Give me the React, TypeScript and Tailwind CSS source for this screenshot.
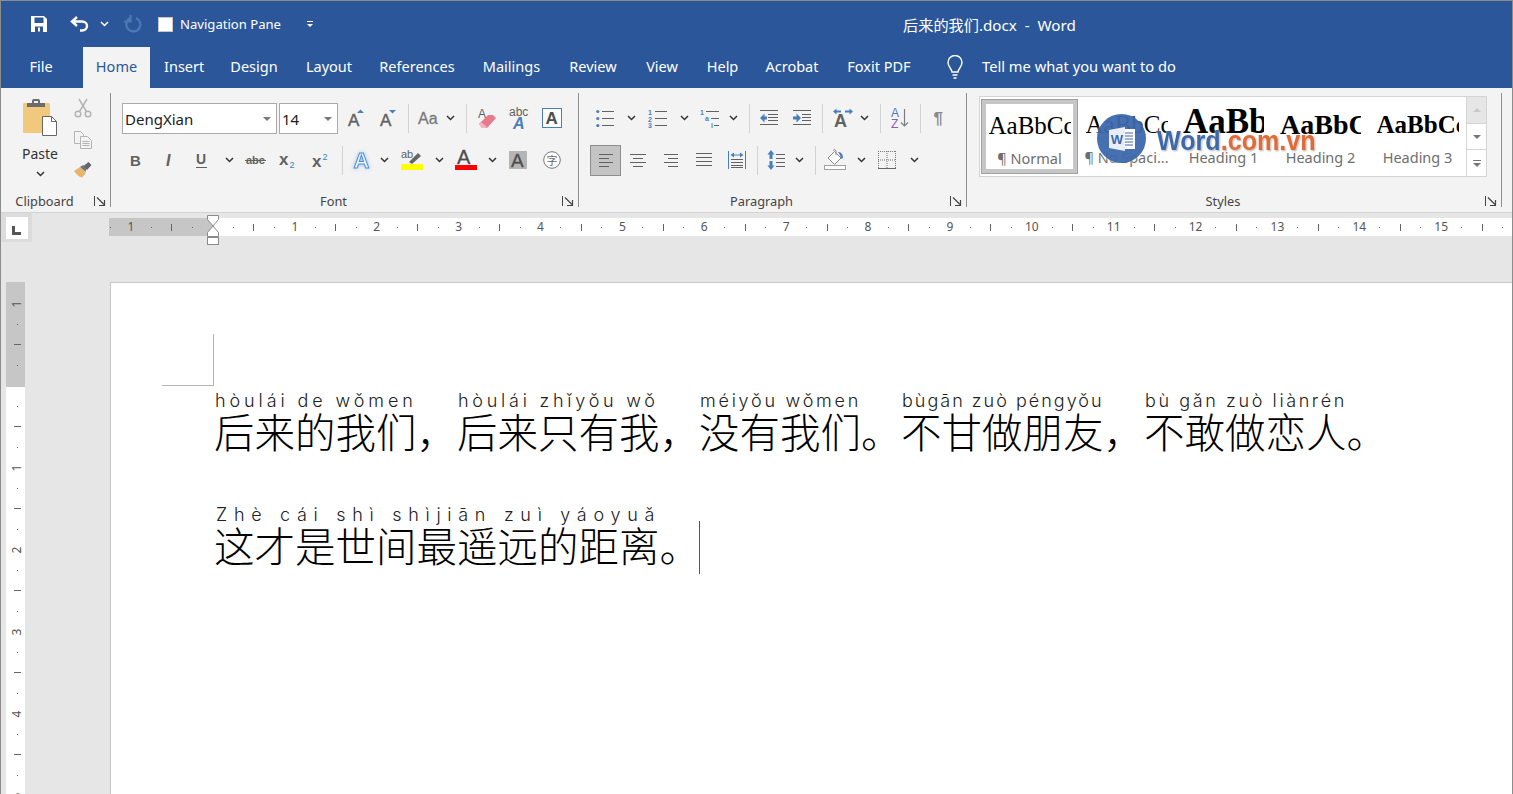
import type { ReactNode } from "react";

const ui = "font-['Noto_Sans','Open_Sans',sans-serif]";
const G = "#616161";
const B = "#4a7ebb";
const SVGFONT = "'Liberation Sans', sans-serif";

function Slot({ w, children }: { w: string; children?: ReactNode }) {
  return <span className={`flex h-full shrink-0 items-center justify-center ${w}`}>{children}</span>;
}

function Sep({ w }: { w: string }) {
  return (
    <span className={`flex h-full shrink-0 items-center justify-center ${w}`}>
      <span className="h-[29px] w-px bg-[#d2d2d2]" />
    </span>
  );
}

function Chev({ color = "#333" }: { color?: string }) {
  return (
    <svg width="9" height="6" viewBox="0 0 9 6" className="shrink-0">
      <path d="M1 1l3.500 3.500L8 1" fill="none" stroke={color} strokeWidth="1.500" />
    </svg>
  );
}

function Launcher() {
  return (
    <svg width="12" height="11" viewBox="0 0 12 11" className="absolute bottom-[5px] right-[4px]">
      <path d="M.5 0v10" stroke="#444" strokeWidth="1" />
      <path d="M3 1.500l7 7M5 9.500h5.500V4" fill="none" stroke="#444" strokeWidth="1.200" />
    </svg>
  );
}

function Glyph({ size = 20, children }: { size?: number; children: ReactNode }) {
  return (
    <svg width={size} height={size} viewBox={`0 0 ${size} ${size}`} className="shrink-0" fontFamily={SVGFONT}>
      {children}
    </svg>
  );
}

function Lines({ rows }: { rows: [number, number, number][] }) {
  return (
    <>
      {rows.map(([x1, x2, y], i) => (
        <path key={i} d={`M${x1} ${y + 0.5}H${x2}`} stroke={G} strokeWidth="1" />
      ))}
    </>
  );
}

function PasteIcon() {
  return (
    <svg width="35" height="38" viewBox="0 0 35 38" className="shrink-0">
      <rect x="0" y="5" width="27" height="30" rx="1.500" fill="#f0c97c" />
      <path d="M4 5h5V3a2 2 0 012-2h4a2 2 0 012 2v2h5v4H4z" fill="#6b6b6b" />
      <rect x="11" y="3" width="4" height="2" fill="#f0f0f0" />
      <path d="M19.500 18.500h9l5 5v14h-14z" fill="#fff" stroke="#666" />
      <path d="M28.500 18.500v5h5" fill="none" stroke="#666" />
    </svg>
  );
}

function CutIcon() {
  return (
    <svg width="18" height="20" viewBox="0 0 18 20" className="shrink-0">
      <g fill="none" stroke="#b4b4b4" strokeWidth="1.500">
        <circle cx="4" cy="16" r="2.800" />
        <circle cx="14" cy="16" r="2.800" />
        <path d="M5.500 13.500L13 1M12.500 13.500L5 1" />
      </g>
    </svg>
  );
}

function CopyIcon() {
  return (
    <svg width="18" height="18" viewBox="0 0 18 18" className="shrink-0">
      <g fill="#f3f3f3" stroke="#b4b4b4">
        <path d="M.5.5h6l3 3v9h-9z" />
        <path d="M6.500 5.500h7l4 4v8h-11z" />
        <path d="M8.500 10.500h7M8.500 12.500h7M8.500 14.500h7" fill="none" />
      </g>
    </svg>
  );
}

function PainterIcon() {
  return (
    <svg width="18" height="16" viewBox="0 0 18 16" className="shrink-0">
      <path d="M0 9l6-4 6 6-4 4.500C5 15 2 12 0 9z" fill="#e6b56c" />
      <path d="M6 5l3-2 3.500 3.500-1 3.500z" fill="#777" />
      <path d="M9.500 4l5-4 3 3-4.500 5z" fill="#666" />
    </svg>
  );
}

function Combo({ w, label, className }: { w: string; label: string; className?: string }) {
  return (
    <span className={`flex h-full shrink-0 items-center justify-between border border-[#ababab] bg-white pl-[2px] pr-[5px] pt-px text-[15px] text-[#222] ${w} ${className ?? ""}`}>
      {label}
      <span className="h-0 w-0 border-x-[4px] border-t-[4px] border-x-transparent border-t-[#777]" />
    </span>
  );
}

function FontRow1() {
  return (
    <div className="flex h-[31px] [&_svg]:-translate-y-px">
      <Combo w="w-[155px]" label="DengXian" className="mr-[2px]" />
      <Combo w="w-[59px]" label="14" />
      <Slot w="w-[36px]">
        <Glyph>
          <text x="2" y="18" fontSize="17" fill={G} stroke={G} strokeWidth=".4">A</text>
          <path d="M11 5l3.500-3.500L18 5z" fill={B} />
        </Glyph>
      </Slot>
      <Slot w="w-[28px]">
        <Glyph>
          <text x="2" y="18" fontSize="17" fill={G} stroke={G} strokeWidth=".4">A</text>
          <path d="M11 2h7l-3.500 3.500z" fill={B} />
        </Glyph>
      </Slot>
      <Sep w="w-[12px]" />
      <Slot w="w-[28px]">
        <Glyph size={24}>
          <text x="2" y="18" fontSize="16" fill="#7a7a7a" stroke="#7a7a7a" strokeWidth=".3">Aa</text>
        </Glyph>
      </Slot>
      <Slot w="w-[16px]"><Chev /></Slot>
      <Sep w="w-[16px]" />
      <Slot w="w-[26px]">
        <Glyph size={22}>
          <text x="2" y="11" fontSize="12" fill={G}>A</text>
          <path d="M3 17l9-9 5 0 3 3-9 10-5 0z" fill="#e8798c" />
          <path d="M3 17l2-2 6 5-1 1h-4z" fill="#f3b5bf" />
        </Glyph>
      </Slot>
      <Slot w="w-[38px]">
        <Glyph size={22}>
          <text x="1" y="9" fontSize="12" fill={G}>abc</text>
          <text x="5" y="22" fontSize="16" fontWeight="bold" fontStyle="italic" fill={B}>A</text>
        </Glyph>
      </Slot>
      <Slot w="w-[28px]">
        <Glyph>
          <rect x=".5" y=".5" width="19" height="19" fill="#fff" stroke={B} />
          <text x="3.500" y="16" fontSize="17" fill="#4d4d4d" fontWeight="bold">A</text>
        </Glyph>
      </Slot>
    </div>
  );
}

function FontRow2() {
  return (
    <div className="mt-[11px] flex h-[31px] [&_svg]:-translate-y-px">
      <Slot w="w-[28px]">
        <Glyph size={16}><text x="2" y="14" fontSize="15" fontWeight="bold" fill={G}>B</text></Glyph>
      </Slot>
      <Slot w="w-[40px]">
        <Glyph size={16}><text x="4" y="14" fontSize="16" fontWeight="bold" fontStyle="italic" fill={G}>I</text></Glyph>
      </Slot>
      <Slot w="w-[24px]">
        <Glyph size={16}>
          <text x="2" y="12" fontSize="14" fontWeight="bold" fill={G}>U</text>
          <path d="M2 15.500h11" stroke={G} />
        </Glyph>
      </Slot>
      <Slot w="w-[30px]"><Chev /></Slot>
      <Slot w="w-[24px]">
        <Glyph size={22}>
          <text x="1" y="15" fontSize="11" fontWeight="bold" fill={G}>abc</text>
          <path d="M0 11.500h21" stroke={G} />
        </Glyph>
      </Slot>
      <Slot w="w-[40px]">
        <Glyph size={18}>
          <text x="0" y="14" fontSize="17" fontWeight="bold" fill={G}>x</text>
          <text x="10.500" y="17" fontSize="9" fill={B}>2</text>
        </Glyph>
      </Slot>
      <Slot w="w-[26px]">
        <Glyph size={18}>
          <text x="0" y="16" fontSize="17" fontWeight="bold" fill={G}>x</text>
          <text x="10.500" y="9" fontSize="9" fill={B}>2</text>
        </Glyph>
      </Slot>
      <Sep w="w-[16px]" />
      <Slot w="w-[24px]">
        <svg width="20" height="20" viewBox="0 0 20 20" className="shrink-0 overflow-visible drop-shadow-[0_0_2px_#9cc3ee]" fontFamily={SVGFONT}>
          <text x="1.500" y="18" fontSize="22" fontWeight="bold" fill="#f2f7fd" stroke="#4f8fd8" strokeWidth="1">A</text>
        </svg>
      </Slot>
      <Slot w="w-[20px]"><Chev /></Slot>
      <Slot w="w-[36px]">
        <Glyph size={24}>
          <text x="1" y="10" fontSize="11" fill={G}>ab</text>
          <path d="M9 14l9-9 3 3-9 8z" fill="#666" />
          <rect x="1" y="16" width="22" height="6" fill="#ffff00" />
        </Glyph>
      </Slot>
      <Slot w="w-[18px]"><Chev /></Slot>
      <Slot w="w-[36px]">
        <Glyph size={24}>
          <text x="3" y="16" fontSize="20" fill="#4d4d4d" stroke="#4d4d4d" strokeWidth=".3">A</text>
          <rect x="1" y="17" width="22" height="5" fill="#ff0000" />
        </Glyph>
      </Slot>
      <Slot w="w-[16px]"><Chev /></Slot>
      <Slot w="w-[36px]">
        <Glyph size={18}>
          <rect width="18" height="18" fill="#b5b5b5" />
          <text x="2" y="16" fontSize="19" fill="#4d4d4d" stroke="#4d4d4d" strokeWidth=".3">A</text>
        </Glyph>
      </Slot>
      <Slot w="w-[32px]">
        <svg width="18" height="18" viewBox="0 0 18 18" className="shrink-0">
          <circle cx="9" cy="9" r="8.300" fill="#fff" stroke="#777" />
          <text x="9" y="13.500" fontSize="11" fill="#666" textAnchor="middle" fontFamily="'Noto Sans CJK SC', sans-serif">字</text>
        </svg>
      </Slot>
    </div>
  );
}

function ParaRow1() {
  return (
    <div className="flex h-[31px] pl-[17px] [&_svg]:-translate-y-px">
      <Slot w="w-[18px]">
        <Glyph size={18}>
          <circle cx="1.800" cy="2.500" r="1.600" fill={B} />
          <circle cx="1.800" cy="9.500" r="1.600" fill={B} />
          <circle cx="1.800" cy="16.500" r="1.600" fill={B} />
          <Lines rows={[[6, 18, 2], [6, 18, 9], [6, 18, 16]]} />
        </Glyph>
      </Slot>
      <Slot w="w-[34px]"><Chev /></Slot>
      <Slot w="w-[20px]">
        <Glyph size={20}>
          <text x="0" y="7" fontSize="7" fill={B} fontWeight="bold">1</text>
          <text x="0" y="14" fontSize="7" fill={B} fontWeight="bold">2</text>
          <text x="0" y="20" fontSize="7" fill={B} fontWeight="bold">3</text>
          <Lines rows={[[7, 19, 3], [7, 19, 10], [7, 19, 17]]} />
        </Glyph>
      </Slot>
      <Slot w="w-[32px]"><Chev /></Slot>
      <Slot w="w-[20px]">
        <Glyph size={20}>
          <text x="0" y="7" fontSize="7" fill={B} fontWeight="bold">1</text>
          <text x="5" y="13" fontSize="7" fill={B} fontWeight="bold">a</text>
          <text x="11" y="19.500" fontSize="7" fill={B} fontWeight="bold">i</text>
          <Lines rows={[[6, 19, 3], [11, 19, 10], [14, 19, 17]]} />
        </Glyph>
      </Slot>
      <Slot w="w-[26px]"><Chev /></Slot>
      <Sep w="w-[6px]" />
      <Slot w="w-[34px]">
        <Glyph size={18}>
          <Lines rows={[[0, 18, 1], [8, 18, 5], [8, 18, 8], [8, 18, 11], [0, 18, 15]]} />
          <path d="M0 9l4.500-4.500V7.500H7v3H4.500v3z" fill={B} />
        </Glyph>
      </Slot>
      <Slot w="w-[32px]">
        <Glyph size={18}>
          <Lines rows={[[0, 18, 1], [9, 18, 5], [9, 18, 8], [9, 18, 11], [0, 18, 15]]} />
          <path d="M8 9L3.500 4.500V7.500H0v3h3.500v3z" fill={B} />
        </Glyph>
      </Slot>
      <Sep w="w-[8px]" />
      <Slot w="w-[34px]">
        <Glyph size={20}>
          <text x="1" y="19" fontSize="18" fontWeight="bold" fill={G}>A</text>
          <path d="M0 3.500l3.500-3v2H8v2H3.500v2zM20 3.500l-3.500-3v2H12v2h4.500v2z" fill={B} />
        </Glyph>
      </Slot>
      <Slot w="w-[8px]"><Chev /></Slot>
      <Sep w="w-[24px]" />
      <Slot w="w-[18px]">
        <Glyph size={20}>
          <text x="0" y="9" fontSize="12" fill={B}>A</text>
          <text x="0" y="19.500" fontSize="12" fill="#8a5bb5">Z</text>
          <path d="M13.500 1v17M10 14.500l3.500 3.500 3.500-3.500" fill="none" stroke="#7c7c7c" strokeWidth="1.200" />
        </Glyph>
      </Slot>
      <Sep w="w-[20px]" />
      <Slot w="w-[18px]">
        <Glyph size={18}>
          <text x="3.500" y="15" fontSize="17" fontWeight="bold" fill="#8a8a8a">¶</text>
        </Glyph>
      </Slot>
    </div>
  );
}

function AlignIcon({ rows }: { rows: [number, number, number][] }) {
  return (
    <svg width="16" height="16" viewBox="0 0 16 16" className="shrink-0">
      <Lines rows={rows} />
    </svg>
  );
}

function ParaRow2() {
  return (
    <div className="mt-[11px] flex h-[31px] pl-[11px] [&_svg]:-translate-y-px">
      <Slot w="w-[31px] border border-[#8e8e8e] bg-[#c4c4c4]">
        <AlignIcon rows={[[1, 15, 2], [1, 11, 6], [1, 15, 10], [1, 11, 14]]} />
      </Slot>
      <Slot w="w-[34px]">
        <AlignIcon rows={[[0, 16, 2], [3, 13, 6], [0, 16, 10], [3, 13, 14]]} />
      </Slot>
      <Slot w="w-[32px]">
        <AlignIcon rows={[[1, 15, 2], [5, 15, 6], [1, 15, 10], [5, 15, 14]]} />
      </Slot>
      <Slot w="w-[34px]">
        <AlignIcon rows={[[0, 16, 1], [0, 16, 5], [0, 16, 9], [0, 16, 13]]} />
      </Slot>
      <Slot w="w-[32px]">
        <Glyph size={18}>
          <path d="M.5 0v18M17.500 0v18" stroke={B} />
          <path d="M2.500 4L6 1.500v2h6v-2L15.500 4 12 6.500v-2H6v2z" fill={B} />
          <Lines rows={[[3, 15, 8], [3, 15, 11], [3, 15, 14], [3, 15, 16]]} />
        </Glyph>
      </Slot>
      <Sep w="w-[8px]" />
      <Slot w="w-[32px]">
        <Glyph size={20}>
          <path d="M3 0L6.500 4.500H4.500V9h-3V4.500h-2z" transform="translate(1 0)" fill={B} />
          <path d="M3 20L6.500 15.500H4.500V11h-3v4.500h-2z" transform="translate(1 0)" fill={B} />
          <Lines rows={[[9, 18, 4], [9, 18, 8], [9, 18, 12], [9, 18, 16]]} />
        </Glyph>
      </Slot>
      <Slot w="w-[12px]"><Chev /></Slot>
      <Sep w="w-[20px]" />
      <Slot w="w-[20px]">
        <svg width="22" height="22" viewBox="0 0 22 22" className="shrink-0">
          <path d="M4 9l6.500-6.500L17 9l-6.500 6.500z" fill="#fff" stroke="#8a8a8a" />
          <path d="M9 1.500c1-1.500 3-1 3 1V6" fill="none" stroke="#8a8a8a" />
          <path d="M14 3c3 0 5 2 5 6l-2 1-1-4z" fill={B} />
          <rect x=".5" y="16.500" width="21" height="4" fill="#fff" stroke="#a0a0a0" />
        </svg>
      </Slot>
      <Slot w="w-[32px]"><Chev /></Slot>
      <Slot w="w-[20px]">
        <svg width="18" height="18" viewBox="0 0 18 18" className="shrink-0">
          <path d="M.5 0v18M9 0v18M17.500 0v18M0 .5h18M0 9h18" fill="none" stroke="#777" strokeDasharray="1 1" />
          <path d="M0 17.500h18" stroke="#666" />
        </svg>
      </Slot>
      <Slot w="w-[34px]"><Chev /></Slot>
    </div>
  );
}

function Group({ w, label, children, top = "pt-[15px]" }: { w: string; label: string; children: ReactNode; top?: string }) {
  return (
    <div className={`relative flex h-full shrink-0 flex-col ${top} ${w}`}>
      {children}
      <div className="mb-[3px] mt-auto h-[16px] pr-[22px] text-center text-[12.800px] leading-[16px] text-[#444]">{label}</div>
      <Launcher />
    </div>
  );
}

function GroupSep() {
  return <div className="mt-[5px] h-[114px] w-px shrink-0 bg-[#8f8f8f]" />;
}

const styleCells = [
  { name: "¶ Normal", sample: "text-[25px] font-normal", clip: "w-[82px]", selected: true },
  { name: "¶ No Spaci...", sample: "text-[25px] font-normal", clip: "w-[82px]", selected: false },
  { name: "Heading 1", sample: "text-[35px] font-bold -mt-[6px]", clip: "w-[81px]", selected: false },
  { name: "Heading 2", sample: "text-[28px] font-bold", clip: "w-[81px]", selected: false },
  { name: "Heading 3", sample: "text-[25px] font-bold", clip: "w-[82px]", selected: false },
];

function StyleGallery() {
  return (
    <div className="ml-[12px] flex h-[81px] w-[508px] border border-[#d4d4d4] bg-white">
      <div className="flex w-[487px] items-center pl-px">
        {styleCells.map((c) => (
          <div key={c.name} className={`flex h-[75px] w-[97px] shrink-0 flex-col items-center ${c.selected ? "border border-[#a0a0a0]" : ""}`}>
            <div className={`flex h-full w-full flex-col items-center ${c.selected ? "border-[4px] border-[#c6c6c6]" : "border-[4px] border-transparent"}`}>
              <div className={`flex h-[44px] items-center overflow-hidden whitespace-nowrap ${c.clip}`}>
                <span className={`font-['Liberation_Serif',serif] text-black ${c.sample}`}>AaBbCcDd</span>
              </div>
              <div className="whitespace-nowrap text-[14.500px] leading-[20px] text-[#6e6e6e]">{c.name}</div>
            </div>
          </div>
        ))}
      </div>
      <div className="flex w-[20px] flex-col border-l border-[#d4d4d4]">
        <span className="flex h-[27px] items-center justify-center border-b border-[#d4d4d4] bg-[#e6e6e6]">
          <span className="h-0 w-0 border-x-[4px] border-b-[4px] border-x-transparent border-b-[#c8c8c8]" />
        </span>
        <span className="flex h-[26px] items-center justify-center border-b border-[#d4d4d4]">
          <span className="h-0 w-0 border-x-[4px] border-t-[4px] border-x-transparent border-t-[#777]" />
        </span>
        <span className="flex flex-1 flex-col items-center justify-center gap-[2px]">
          <span className="h-px w-[8px] bg-[#777]" />
          <span className="h-0 w-0 border-x-[4px] border-t-[4px] border-x-transparent border-t-[#777]" />
        </span>
      </div>
    </div>
  );
}

function Ribbon() {
  return (
    <div className={`flex h-[125px] shrink-0 border-b border-[#d4d4d4] bg-[#f3f3f3] ${ui}`}>
      <Group w="w-[109px]" label="Clipboard" top="pt-[10px]">
        <div className="flex">
          <div className="ml-[7px] flex w-[64px] flex-col items-center">
            <PasteIcon />
            <div className="mt-[8px] text-[14px] leading-[20px] text-[#333]">Paste</div>
            <div className="mt-[7px] leading-none"><Chev /></div>
          </div>
          <div className="-ml-px flex w-[24px] flex-col items-center">
            <span className="flex h-[19px] items-center"><CutIcon /></span>
            <span className="mt-[13px] flex h-[19px] items-center"><CopyIcon /></span>
            <span className="mt-[11px] flex h-[19px] items-center"><PainterIcon /></span>
          </div>
        </div>
      </Group>
      <GroupSep />
      <Group w="w-[467px]" label="Font">
        <div className="pl-[11px]">
          <FontRow1 />
          <FontRow2 />
        </div>
      </Group>
      <GroupSep />
      <Group w="w-[387px]" label="Paragraph">
        <ParaRow1 />
        <ParaRow2 />
      </Group>
      <GroupSep />
      <Group w="w-[534px]" label="Styles" top="pt-[8px]">
        <StyleGallery />
      </Group>
      <GroupSep />
    </div>
  );
}

const tabs = [
  { label: "Insert", w: "w-[40px]", ml: "ml-[14px]" },
  { label: "Design", w: "w-[48px]", ml: "ml-[26px]" },
  { label: "Layout", w: "w-[48px]", ml: "ml-[27px]" },
  { label: "References", w: "w-[76px]", ml: "ml-[26px]" },
  { label: "Mailings", w: "w-[59px]", ml: "ml-[27px]" },
  { label: "Review", w: "w-[50px]", ml: "ml-[27px]" },
  { label: "View", w: "w-[34px]", ml: "ml-[27px]" },
  { label: "Help", w: "w-[33px]", ml: "ml-[27px]" },
  { label: "Acrobat", w: "w-[54px]", ml: "ml-[26px]" },
  { label: "Foxit PDF", w: "w-[66px]", ml: "ml-[27px]" },
];

function TitleBar() {
  return (
    <div className={`flex h-[87px] shrink-0 flex-col bg-[#2b579a] text-white ${ui}`}>
      <div className="flex h-[46px] items-center pl-[29px]">
        <svg width="18" height="18" viewBox="0 0 18 18" className="shrink-0">
          <path d="M1 1h13l3 3v13H1z" fill="#fff" />
          <rect x="4.500" y="2.500" width="9" height="5.500" fill="#2b579a" />
          <rect x="5" y="11.500" width="8" height="5.500" fill="#2b579a" />
          <rect x="8" y="12.500" width="2" height="4" fill="#fff" />
        </svg>
        <svg width="20" height="16" viewBox="0 0 20 16" className="ml-[22px] shrink-0">
          <path d="M7 1L2 5.500 7 10M3 5.500h9c3 0 5 2 5 4.500s-2 4.500-5 4.500H10" fill="none" stroke="#fff" strokeWidth="2.400" />
        </svg>
        <span className="ml-[9px] flex w-[10px] justify-center"><Chev color="#fff" /></span>
        <svg width="18" height="18" viewBox="0 0 18 18" className="ml-[15px] shrink-0">
          <path d="M12 3a7 7 0 11-6 .3M6.500 0v6.500H0" fill="none" stroke="#4e78b4" strokeWidth="2.200" />
        </svg>
        <span className="ml-[16px] h-[15px] w-[15px] border border-[#c8c8c8] bg-white" />
        <span className="ml-[7px] w-[101px] whitespace-nowrap pt-px text-[13.100px]">Navigation Pane</span>
        <span className="ml-[26px] flex w-[6px] flex-col items-center gap-[2px]">
          <span className="h-px w-[6px] bg-white" />
          <span className="h-0 w-0 border-x-[3px] border-t-[3px] border-x-transparent border-t-white" />
        </span>
        <span className="ml-[590px] w-[176px] whitespace-nowrap pt-[2px] font-['Noto_Sans','Noto_Sans_CJK_SC',sans-serif] text-[15.200px]">
          后来的我们.docx&nbsp;&nbsp;-&nbsp;&nbsp;Word
        </span>
      </div>
      <div className="flex h-[41px] items-center text-[14.500px]">
        <div className="flex h-full w-[82px] items-center justify-center pb-[2px] pr-[2px]">File</div>
        <div className="flex h-full w-[67px] items-center justify-center bg-[#f3f3f3] pb-[2px] text-[#2b579a]">Home</div>
        <div className="flex h-full items-center pb-[2px]">
          {tabs.map((t) => (
            <div key={t.label} className={`whitespace-nowrap text-center ${t.w} ${t.ml}`}>{t.label}</div>
          ))}
          <svg width="18" height="24" viewBox="0 0 18 24" className="ml-[34px] shrink-0">
            <path d="M6 17c0-3-4-5-4-9.500a7 7 0 0114 0C16 12 12 14 12 17zM6.500 20h5M7.500 23h3" fill="none" stroke="#fff" strokeWidth="1.400" />
          </svg>
          <div className="ml-[18px] whitespace-nowrap text-[14.700px]">Tell me what you want to do</div>
        </div>
      </div>
    </div>
  );
}

function HCell({ kind }: { kind: string }) {
  return (
    <span className="flex w-[20.480px] shrink-0 items-center justify-center text-[12px] leading-none text-[#555]">
      {kind === "." && <span className="h-px w-px bg-[#666]" />}
      {kind === "|" && <span className="h-[7px] w-px bg-[#666]" />}
      {kind !== "." && kind !== "|" && kind}
    </span>
  );
}

function VCell({ kind }: { kind: string }) {
  return (
    <span className="flex h-[20.500px] shrink-0 items-center justify-center pl-[3px] text-[12px] leading-none text-[#555]">
      {kind === "." && <span className="h-px w-px bg-[#666]" />}
      {kind === "|" && <span className="h-px w-[7px] bg-[#666]" />}
      {kind !== "." && kind !== "|" && <span className="-rotate-90">{kind}</span>}
    </span>
  );
}

const cycle = (n: number) => [".", "|", ".", String(n)];
const hWhite = Array.from({ length: 16 }).flatMap((_, i) => cycle(i + 1));
const vWhite = Array.from({ length: 6 }).flatMap((_, i) => cycle(i + 1));

function TopRuler() {
  return (
    <div className={`relative flex h-[24px] shrink-0 items-start ${ui}`}>
      <div className="flex h-[29px] w-[31px] shrink-0 items-center justify-center bg-[#dcdcdc]">
        <span className="flex h-[22px] w-[22px] items-end justify-center bg-white pb-[4px]">
          <span className="h-[9px] w-[9px] border-b-[3px] border-l-[3px] border-[#555]" />
        </span>
      </div>
      <div className="ml-[77px] mt-[5px] flex h-[18px] w-[104px] shrink-0 items-center overflow-hidden bg-[#c6c6c6]">
        <div className="-ml-[8.750px] flex">
          {[".", "1", ".", "|", "."].map((k, i) => <HCell key={i} kind={k} />)}
        </div>
      </div>
      <div className="mt-[5px] flex h-[18px] flex-1 items-center overflow-hidden bg-white pl-[10.250px]">
        {hWhite.map((k, i) => <HCell key={i} kind={k} />)}
      </div>
      <svg width="12" height="31" viewBox="0 0 12 31" className="absolute left-[206px] top-[2px]">
        <path d="M.5.5h11v4L6 11 .5 4.500zM6 11l5.500 6.500v4H.5v-4z" fill="#fff" stroke="#8a8a8a" />
        <rect x=".5" y="22.500" width="11" height="7" fill="#fff" stroke="#8a8a8a" />
      </svg>
    </div>
  );
}

function SideRuler() {
  return (
    <div className={`ml-[5px] flex h-full w-[19px] shrink-0 flex-col ${ui}`}>
      <div className="flex h-[105px] shrink-0 flex-col bg-[#c6c6c6] pt-[11.500px]">
        {["1", ".", "|", "."].map((k, i) => <VCell key={i} kind={k} />)}
      </div>
      <div className="flex flex-1 flex-col overflow-hidden bg-white pt-[8.750px]">
        {vWhite.map((k, i) => <VCell key={i} kind={k} />)}
      </div>
    </div>
  );
}

const pinyin = "font-['Inter',sans-serif] font-light text-[18px] leading-[12px] text-[#222] whitespace-nowrap";
const hanzi = "font-['Noto_Sans_CJK_SC',sans-serif] font-extralight text-[40.500px] leading-[48px] text-black whitespace-nowrap";

const line1 = [
  { py: "hòulái de wǒmen", zh: "后来的我们，", w: "w-[243px]", track: "tracking-[3.900px]" },
  { py: "hòulái zhǐyǒu wǒ", zh: "后来只有我，", w: "w-[242px]", track: "tracking-[3.750px]" },
  { py: "méiyǒu wǒmen", zh: "没有我们。", w: "w-[202px]", track: "tracking-[2.750px]" },
  { py: "bùgān zuò péngyǒu", zh: "不甘做朋友，", w: "w-[243px]", track: "tracking-[2px]" },
  { py: "bù gǎn zuò liànrén", zh: "不敢做恋人。", w: "w-[243px]", track: "tracking-[2.600px]" },
];

function Page() {
  return (
    <div className="min-w-0 flex-1 border-l border-t border-[#c6c6c6] bg-white pl-[51px] pt-[51px]">
      <div className="h-[52px] w-[52px] border-b border-r border-[#b4b4b4]" />
      <div className="ml-[52px] mt-[9px] flex h-[114px] items-start">
        {line1.map((s) => (
          <div key={s.zh} className={`shrink-0 ${s.w}`}>
            <div className={`pl-px ${pinyin} ${s.track}`}>{s.py}</div>
            <div className={hanzi}>{s.zh}</div>
          </div>
        ))}
      </div>
      <div className="ml-[52px] flex items-start">
        <div className="w-[485px] shrink-0">
          <div className={`pl-[2px] ${pinyin} tracking-[6.700px]`}>Zhè cái shì shìjiān zuì yáoyuǎ</div>
          <div className={hanzi}>这才是世间最遥远的距离。</div>
        </div>
        <div className="mt-[12px] h-[53px] w-px shrink-0 bg-[#555]" />
      </div>
    </div>
  );
}

function Watermark() {
  return (
    <div className="absolute left-[1096px] top-[113px] flex items-center">
      <div className="flex h-[49px] w-[49px] items-center justify-center rounded-full bg-[#3d68ad]/95 shadow-[0_0_3px_#fff]">
        <svg width="30" height="30" viewBox="0 0 30 30">
          <rect x="15" y="5" width="13" height="20" fill="#fff" />
          <path d="M17 9h9M17 12h9M17 15h9M17 18h9M17 21h9" stroke="#3d68ad" />
          <path d="M2 6l16-3v24L2 24z" fill="#e9eef6" />
          <text x="10" y="20" fontSize="13" fontWeight="bold" fill="#3d68ad" textAnchor="middle" fontFamily={SVGFONT}>W</text>
        </svg>
      </div>
      <div className="ml-[11px] mt-[5px] origin-left scale-x-[0.93] whitespace-nowrap font-['Liberation_Sans',sans-serif] text-[27px] font-bold leading-none [text-shadow:0_0_3px_#fff,1px_1px_2px_#9a9a9a]">
        <span className="text-[#3e69a8]">Word</span>
        <span className="text-[#e26b35]">.com.vn</span>
      </div>
    </div>
  );
}

export default function App() {
  return (
    <div className="relative flex h-[794px] w-[1513px] flex-col overflow-hidden border-x border-t border-[#8c8c8c] bg-[#e6e6e6]">
      <TitleBar />
      <Ribbon />
      <TopRuler />
      <div className="mt-[45px] flex min-h-0 flex-1">
        <div className="w-[109px] shrink-0"><SideRuler /></div>
        <Page />
      </div>
      <Watermark />
    </div>
  );
}
